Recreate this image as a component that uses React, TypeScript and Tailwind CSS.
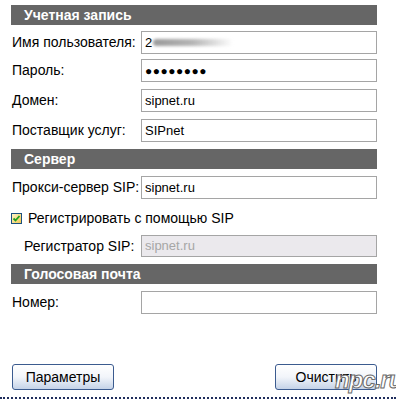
import { ReactNode } from 'react';

const font = { fontFamily: '"Liberation Sans", Arial, sans-serif' };

function Header({ title, className = '' }: { title: string; className?: string }) {
    return (
        <div className={`h-[20px] bg-[#666666] pl-[13px] flex items-center text-white font-bold text-[14px] ${className}`}>
            {title}
        </div>
    );
}

function Row({ label, children, className = '', indent = false }: { label: string; children: ReactNode; className?: string; indent?: boolean }) {
    return (
        <div className={`flex items-center h-[23px] ${className}`}>
            <div className={`w-[130px] text-[14px] text-black ${indent ? 'pl-[13px]' : 'pl-[1px]'}`}>{label}</div>
            {children}
        </div>
    );
}

function Field({ value, disabled = false, children }: { value?: string; disabled?: boolean; children?: ReactNode }) {
    return (
        <div
            className={`w-[236px] h-full border border-[#a5a5a5] flex items-center pl-[3px] text-[13px] ${
                disabled ? 'bg-[#ebe9ed] text-[#a6a6a6]' : 'bg-white text-black'
            }`}
        >
            {children ?? value}
        </div>
    );
}

function Button({ label }: { label: string }) {
    return (
        <button className="w-[102px] h-[26px] rounded-[3px] border border-[#3b5b8f] bg-gradient-to-b from-white via-[#f2f5fa] to-[#c5d3e8] text-[14px] text-black">
            {label}
        </button>
    );
}

export default function App() {
    return (
        <div className="w-[396px] h-[401px] bg-white relative overflow-hidden" style={font}>
            <div className="pl-[11px] pr-[19px] pt-[5px]">
                <Header title="Учетная запись" />
                <Row label="Имя пользователя:" className="mt-[6px]">
                    <Field>
                        <span>2</span>
                        <span className="ml-[1px] w-[80px] h-[7px] rounded-full bg-gradient-to-r from-[#9a9a9a] via-[#b5b5b5] to-transparent blur-[1.5px]" />
                    </Field>
                </Row>
                <Row label="Пароль:" className="mt-[5px]">
                    <Field>
                        <span className="text-[12px] tracking-[0.5px] leading-none">●●●●●●●●</span>
                    </Field>
                </Row>
                <Row label="Домен:" className="mt-[7px]">
                    <Field value="sipnet.ru" />
                </Row>
                <Row label="Поставщик услуг:" className="mt-[7px]">
                    <Field value="SIPnet" />
                </Row>
                <Header title="Сервер" className="mt-[7px]" />
                <Row label="Прокси-сервер SIP:" className="mt-[7px]">
                    <Field value="sipnet.ru" />
                </Row>
                <div className="flex items-center mt-[12px] h-[14px]">
                    <div className="w-[11px] h-[11px] border border-[#1c5180] bg-gradient-to-br from-[#fff6c8] to-[#f2c84b] flex items-center justify-center">
                        <svg width="9" height="9" viewBox="0 0 9 9">
                            <path d="M1.5 4.5 L3.5 6.5 L7.5 2" fill="none" stroke="#21a121" strokeWidth="1.8" />
                        </svg>
                    </div>
                    <span className="ml-[6px] text-[14px] text-black">Регистрировать с помощью SIP</span>
                </div>
                <Row label="Регистратор SIP:" indent className="mt-[10px] !h-[22px]">
                    <Field value="sipnet.ru" disabled />
                </Row>
                <Header title="Голосовая почта" className="mt-[7px]" />
                <Row label="Номер:" className="mt-[7px]">
                    <Field />
                </Row>
                <div className="flex justify-between mt-[50px] pl-[1px]">
                    <Button label="Параметры" />
                    <Button label="Очистить" />
                </div>
            </div>
            <div className="absolute left-0 right-0 top-[397px] border-b-2 border-dotted border-[#1f2d5c]" />
            <div className="absolute left-[335px] top-[368px] italic font-bold text-[24px] leading-none tracking-[-1px] text-white [-webkit-text-stroke:1px_#6b6b6b]">
                npc.ru
            </div>
        </div>
    );
}
